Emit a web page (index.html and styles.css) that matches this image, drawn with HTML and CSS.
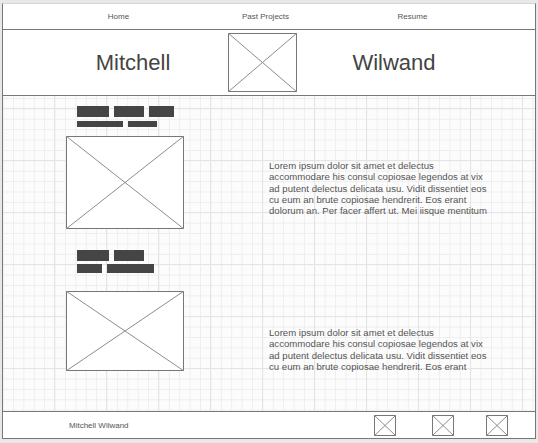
FILE: index.html
```html
<!DOCTYPE html>
<html>
<head>
<meta charset="utf-8">
<link rel="stylesheet" href="styles.css">
</head>
<body>
<div class="frame">
  <nav class="nav">
    <span>Home</span>
    <span>Past Projects</span>
    <span>Resume</span>
  </nav>
  <header class="banner">
    <div class="name name-left">Mitchell</div>
    <svg class="ph ph-logo" viewBox="0 0 100 100" preserveAspectRatio="none"><rect x="0" y="0" width="100" height="100" fill="#fff" stroke="#777" stroke-width="2" vector-effect="non-scaling-stroke"/><line x1="0" y1="0" x2="100" y2="100" stroke="#8c8c8c" vector-effect="non-scaling-stroke"/><line x1="100" y1="0" x2="0" y2="100" stroke="#8c8c8c" vector-effect="non-scaling-stroke"/></svg>
    <div class="name name-right">Wilwand</div>
  </header>
  <main class="content">
    <section class="project project-1">
      <div class="media">
        <div class="tags">
          <div class="tag-row row-a"><span class="bar w32"></span><span class="bar w30"></span><span class="bar w25"></span></div>
          <div class="tag-row row-b"><span class="bar w46"></span><span class="bar w29"></span></div>
        </div>
        <svg class="ph ph-main" viewBox="0 0 100 100" preserveAspectRatio="none"><rect x="0" y="0" width="100" height="100" fill="#fff" stroke="#777" stroke-width="2" vector-effect="non-scaling-stroke"/><line x1="0" y1="0" x2="100" y2="100" stroke="#8c8c8c" vector-effect="non-scaling-stroke"/><line x1="100" y1="0" x2="0" y2="100" stroke="#8c8c8c" vector-effect="non-scaling-stroke"/></svg>
      </div>
      <p class="desc">Lorem ipsum dolor sit amet et delectus<br>accommodare his consul copiosae legendos at vix<br>ad putent delectus delicata usu. Vidit dissentiet eos<br>cu eum an brute copiosae hendrerit. Eos erant<br>dolorum an. Per facer affert ut. Mei iisque mentitum</p>
    </section>
    <section class="project project-2">
      <div class="media">
        <div class="tags">
          <div class="tag-row row-a"><span class="bar w32"></span><span class="bar w30"></span></div>
          <div class="tag-row row-c"><span class="bar w25"></span><span class="bar w47"></span></div>
        </div>
        <svg class="ph ph-main2" viewBox="0 0 100 100" preserveAspectRatio="none"><rect x="0" y="0" width="100" height="100" fill="#fff" stroke="#777" stroke-width="2" vector-effect="non-scaling-stroke"/><line x1="0" y1="0" x2="100" y2="100" stroke="#8c8c8c" vector-effect="non-scaling-stroke"/><line x1="100" y1="0" x2="0" y2="100" stroke="#8c8c8c" vector-effect="non-scaling-stroke"/></svg>
      </div>
      <p class="desc">Lorem ipsum dolor sit amet et delectus<br>accommodare his consul copiosae legendos at vix<br>ad putent delectus delicata usu. Vidit dissentiet eos<br>cu eum an brute copiosae hendrerit. Eos erant</p>
    </section>
  </main>
  <footer class="footer">
    <span class="foot-name">Mitchell Wilwand</span>
    <div class="icons">
      <svg class="ph ph-icon" viewBox="0 0 100 100" preserveAspectRatio="none"><rect x="0" y="0" width="100" height="100" fill="#fff" stroke="#777" stroke-width="2" vector-effect="non-scaling-stroke"/><line x1="0" y1="0" x2="100" y2="100" stroke="#8c8c8c" vector-effect="non-scaling-stroke"/><line x1="100" y1="0" x2="0" y2="100" stroke="#8c8c8c" vector-effect="non-scaling-stroke"/></svg>
      <svg class="ph ph-icon i2" viewBox="0 0 100 100" preserveAspectRatio="none"><rect x="0" y="0" width="100" height="100" fill="#fff" stroke="#777" stroke-width="2" vector-effect="non-scaling-stroke"/><line x1="0" y1="0" x2="100" y2="100" stroke="#8c8c8c" vector-effect="non-scaling-stroke"/><line x1="100" y1="0" x2="0" y2="100" stroke="#8c8c8c" vector-effect="non-scaling-stroke"/></svg>
      <svg class="ph ph-icon i3" viewBox="0 0 100 100" preserveAspectRatio="none"><rect x="0" y="0" width="100" height="100" fill="#fff" stroke="#777" stroke-width="2" vector-effect="non-scaling-stroke"/><line x1="0" y1="0" x2="100" y2="100" stroke="#8c8c8c" vector-effect="non-scaling-stroke"/><line x1="100" y1="0" x2="0" y2="100" stroke="#8c8c8c" vector-effect="non-scaling-stroke"/></svg>
    </div>
  </footer>
</div>
</body>
</html>
```

FILE: styles.css
```css
* { box-sizing: border-box; }
html, body { margin: 0; padding: 0; }
body {
  background: #e8e8e8;
  font-family: "Liberation Sans", Arial, sans-serif;
  width: 538px;
  height: 443px;
  overflow: hidden;
}
.frame {
  margin: 3px 0 0 2px;
  width: 534px;
  background: #fff;
  border-top: 1px solid #d4d4d4;
  border-left: 1px solid #777;
  border-right: 1px solid #777;
  border-bottom: 1px solid #777;
}
.nav {
  height: 26px;
  border-bottom: 1px solid #777;
  display: grid;
  grid-template-columns: repeat(3, 147px);
  padding-left: 42px;
  align-items: center;
  font-size: 8px;
  color: #555;
}
.nav span { text-align: center; }
.banner {
  height: 66px;
  border-bottom: 1px solid #777;
  display: grid;
  grid-template-columns: 225px 69px 1fr;
  align-items: center;
}
.name {
  font-size: 22px;
  color: #444;
  text-align: center;
}
.name-left { padding-left: 35px; }
.name-right { padding-right: 44px; }
.ph { display: block; overflow: hidden; }
.ph-logo { width: 69px; height: 59px; }
.content {
  height: 315px;
  padding-top: 10px;
  background-color: #fcfcfc;
  background-image:
    linear-gradient(to right, #e4e4e4 1px, transparent 1px),
    linear-gradient(to bottom, #e4e4e4 1px, transparent 1px),
    linear-gradient(to right, #eeeeee 1px, transparent 1px),
    linear-gradient(to bottom, #eeeeee 1px, transparent 1px);
  background-size: 52px 52px, 52px 52px, 10.4px 10.4px, 10.4px 10.4px;
  background-position: 51px 12px, 51px 12px, 10px 2px, 10px 2px;
}
.project {
  display: flex;
  align-items: flex-start;
  padding-left: 63px;
}
.project-2 { margin-top: 21px; }
.media { width: 118px; }
.tags { padding-left: 11px; display: flex; flex-direction: column; }
.tag-row { display: flex; gap: 5px; }
.row-a { height: 11px; }
.row-b { height: 6px; margin-top: 4px; }
.row-c { height: 9px; margin-top: 3px; }
.bar { display: block; height: 100%; background: #454545; }
.w25 { width: 25px; }
.w29 { width: 29px; }
.w30 { width: 30px; }
.w32 { width: 32px; }
.w46 { width: 46px; }
.w47 { width: 47px; }
.ph-main { width: 118px; height: 93px; margin-top: 9px; }
.ph-main2 { width: 118px; height: 80px; margin-top: 18px; }
.desc {
  margin: 0 0 0 85px;
  font-size: 9.6px;
  line-height: 11.25px;
  color: #555;
  white-space: nowrap;
}
.project-1 .desc { margin-top: 54px; }
.project-2 .desc { margin-top: 77px; }
.footer {
  height: 27px;
  border-top: 1px solid #777;
  display: flex;
  align-items: center;
  padding-left: 66px;
  padding-right: 27px;
}
.foot-name { font-size: 8px; color: #555; }
.icons { margin-left: auto; display: flex; }
.ph-icon { width: 22px; height: 21px; }
.i2 { margin-left: 36px; }
.i3 { margin-left: 32px; }
```
